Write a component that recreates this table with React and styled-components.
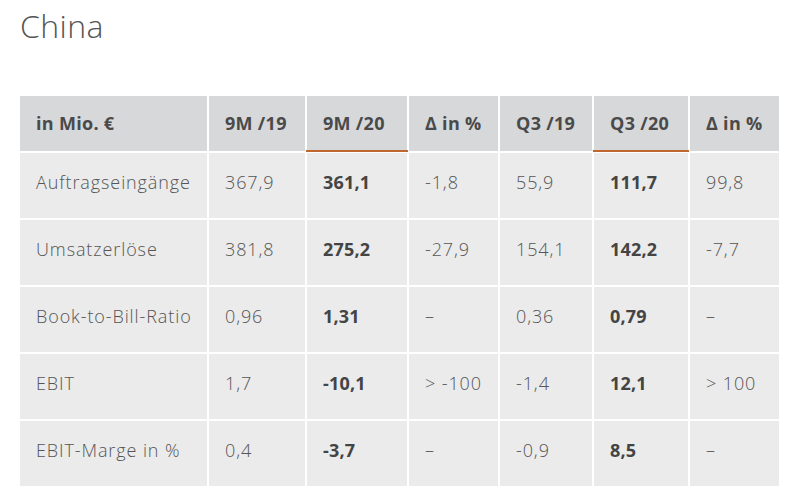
import React from 'react';
import styled, { createGlobalStyle } from 'styled-components';

const GlobalStyle = createGlobalStyle`
    body {
        margin: 0;
        background: #fff;
        font-family: "Open Sans", "Liberation Sans", sans-serif;
        color: #555;
    }
`;

const Page = styled.div`
    padding: 6px 12px 0 20px;
`;

const Title = styled.h2`
    margin: 0 0 50px 0;
    font-size: 32px;
    font-weight: 300;
    letter-spacing: 0.4px;
    color: #555;
    line-height: 40px;
`;

const Table = styled.div`
    display: grid;
    grid-template-columns: 187px 96px 100px 89px 92px 94px 89px;
    grid-auto-rows: 65px;
    grid-template-rows: 55px;
    gap: 2px;
    width: 759px;
`;

const HeadCell = styled.div`
    display: flex;
    align-items: center;
    padding: 0 0 2px 16px;
    background: #d7d8da;
    font-size: 18px;
    font-weight: 700;
    letter-spacing: 0.3px;
    color: #4a4a4a;
    white-space: nowrap;
    position: relative;

    ${props => props.$accent && `
        &::after {
            content: "";
            position: absolute;
            left: -1px;
            right: -1px;
            bottom: -1px;
            height: 2px;
            background: #c0672f;
        }
    `}
`;

const Cell = styled.div`
    display: flex;
    align-items: center;
    padding: 0 0 7px 16px;
    background: #ebebeb;
    font-size: 18px;
    font-weight: ${props => (props.$bold ? 700 : 300)};
    letter-spacing: ${props => (props.$bold ? '0.2px' : '0.9px')};
    color: ${props => (props.$bold ? '#444' : '#555')};
    white-space: nowrap;
`;

const head = ['in Mio. €', '9M /19', '9M /20', 'Δ in %', 'Q3 /19', 'Q3 /20', 'Δ in %'];

const rows = [
    ['Auftragseingänge', '367,9', '361,1', '-1,8', '55,9', '111,7', '99,8'],
    ['Umsatzerlöse', '381,8', '275,2', '-27,9', '154,1', '142,2', '-7,7'],
    ['Book-to-Bill-Ratio', '0,96', '1,31', '–', '0,36', '0,79', '–'],
    ['EBIT', '1,7', '-10,1', '> -100', '-1,4', '12,1', '> 100'],
    ['EBIT-Marge in %', '0,4', '-3,7', '–', '-0,9', '8,5', '–'],
];

function App() {
    return (
        <Page>
            <GlobalStyle />
            <Title>China</Title>
            <Table>
                {head.map((h, i) => (
                    <HeadCell key={i} $accent={i === 2 || i === 5}>{h}</HeadCell>
                ))}
                {rows.map((r, ri) =>
                    r.map((c, ci) => (
                        <Cell key={ri + '-' + ci} $bold={ci === 2 || ci === 5}>{c}</Cell>
                    ))
                )}
            </Table>
        </Page>
    );
}

export default App;
